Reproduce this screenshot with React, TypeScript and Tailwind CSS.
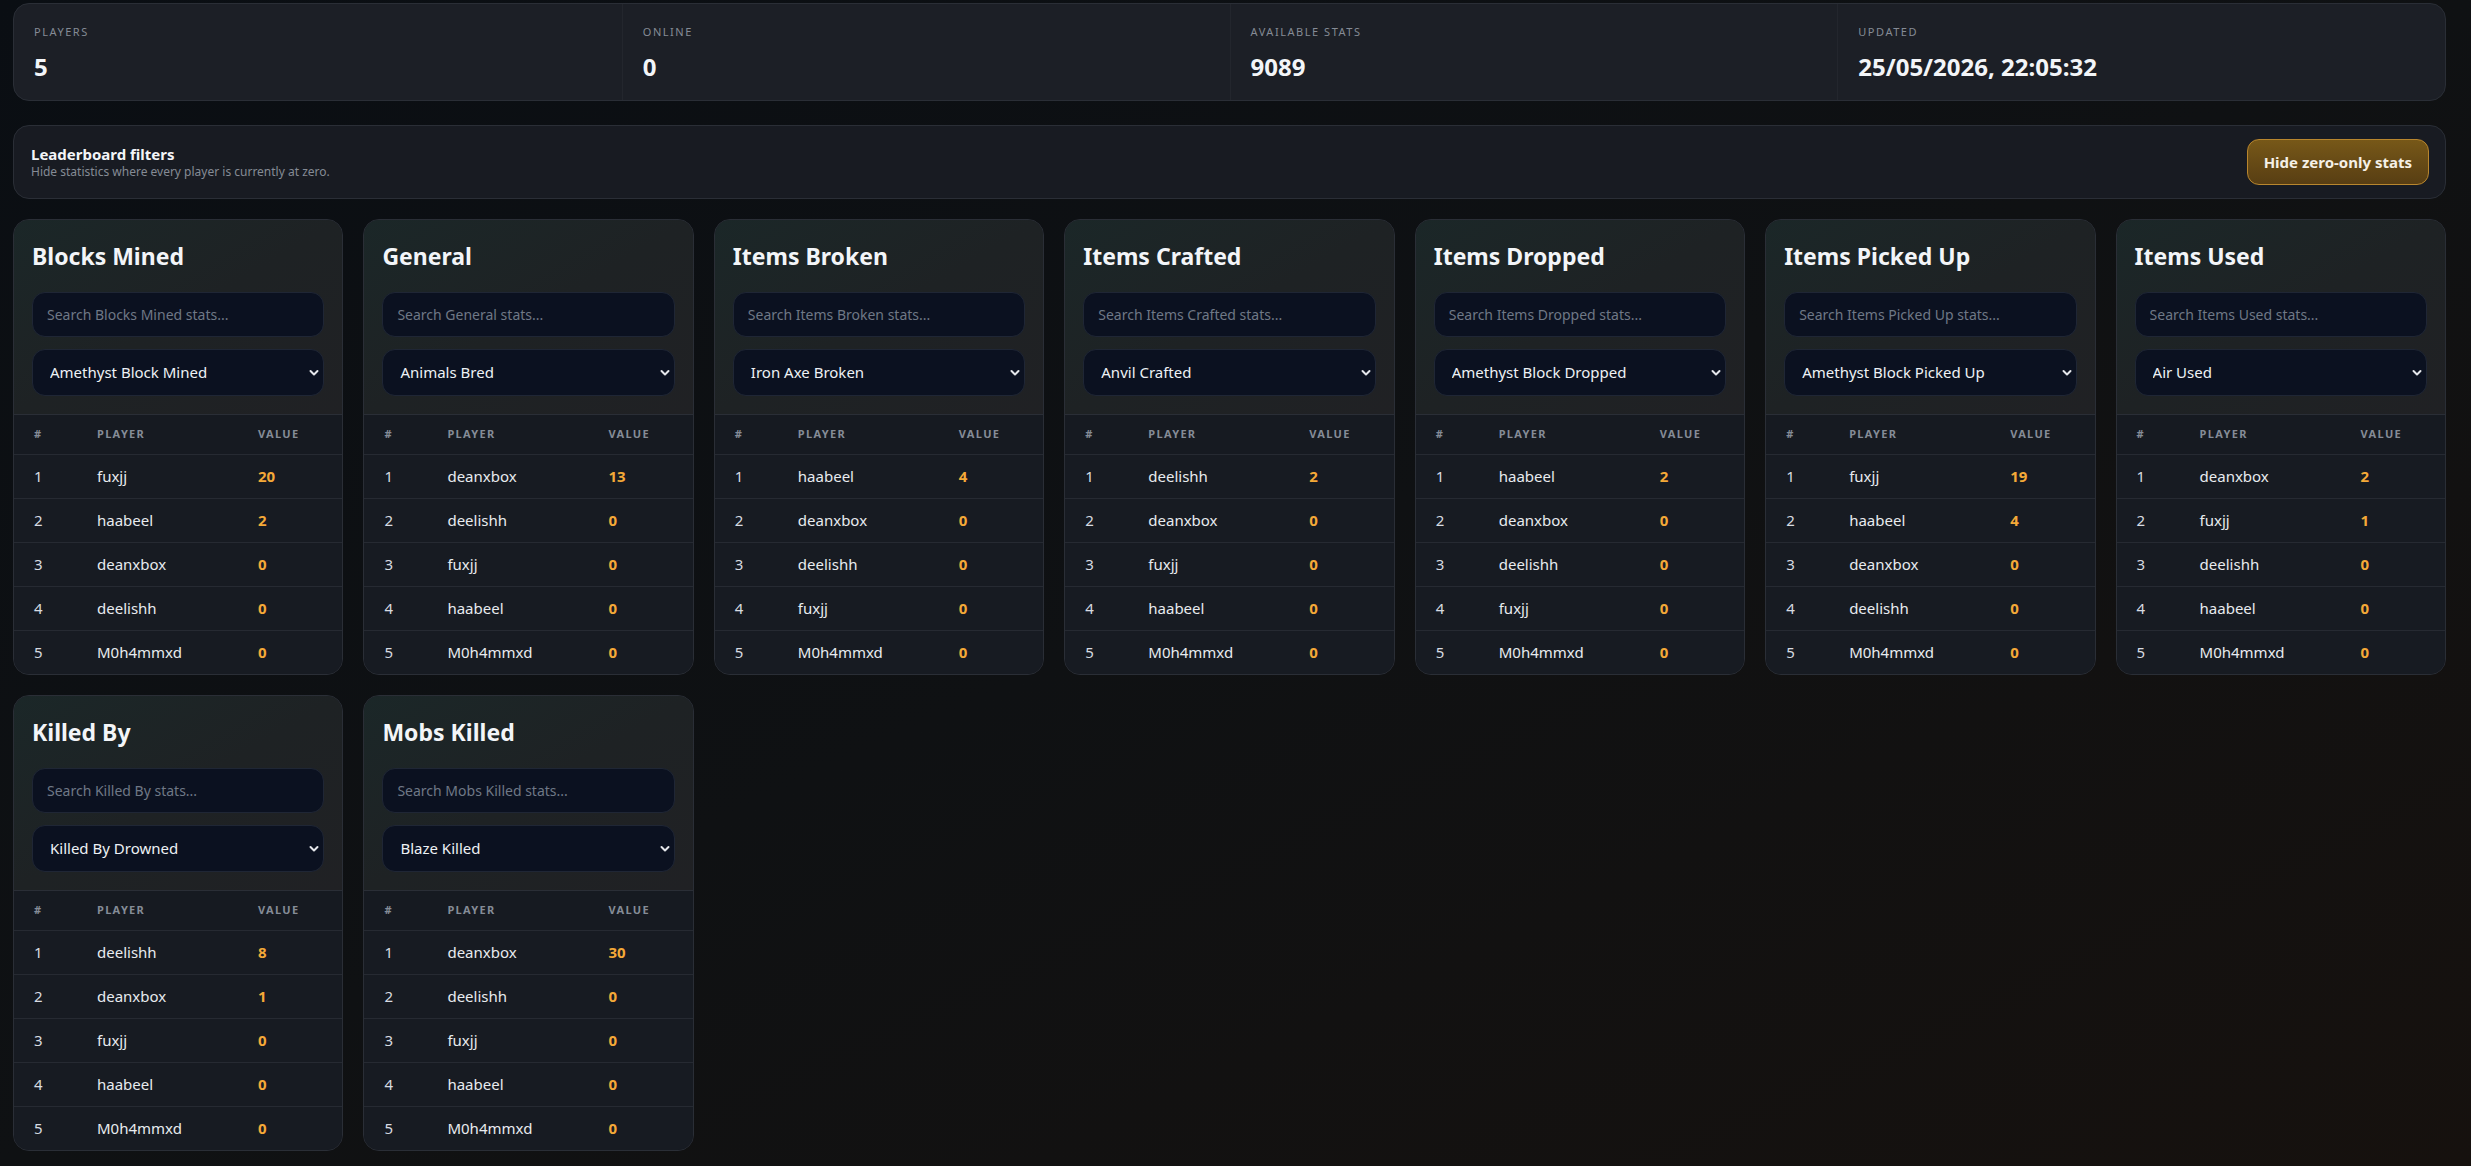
import React from 'react'

type Row = [string, number]

interface Board {
  title: string
  stat: string
  rows: Row[]
}

const STATS = [
  { label: 'Players', value: '5' },
  { label: 'Online', value: '0' },
  { label: 'Available stats', value: '9089' },
  { label: 'Updated', value: '25/05/2026, 22:05:32' },
]

const BOARDS: Board[] = [
  { title: 'Blocks Mined', stat: 'Amethyst Block Mined', rows: [['fuxjj', 20], ['haabeel', 2], ['deanxbox', 0], ['deelishh', 0], ['M0h4mmxd', 0]] },
  { title: 'General', stat: 'Animals Bred', rows: [['deanxbox', 13], ['deelishh', 0], ['fuxjj', 0], ['haabeel', 0], ['M0h4mmxd', 0]] },
  { title: 'Items Broken', stat: 'Iron Axe Broken', rows: [['haabeel', 4], ['deanxbox', 0], ['deelishh', 0], ['fuxjj', 0], ['M0h4mmxd', 0]] },
  { title: 'Items Crafted', stat: 'Anvil Crafted', rows: [['deelishh', 2], ['deanxbox', 0], ['fuxjj', 0], ['haabeel', 0], ['M0h4mmxd', 0]] },
  { title: 'Items Dropped', stat: 'Amethyst Block Dropped', rows: [['haabeel', 2], ['deanxbox', 0], ['deelishh', 0], ['fuxjj', 0], ['M0h4mmxd', 0]] },
  { title: 'Items Picked Up', stat: 'Amethyst Block Picked Up', rows: [['fuxjj', 19], ['haabeel', 4], ['deanxbox', 0], ['deelishh', 0], ['M0h4mmxd', 0]] },
  { title: 'Items Used', stat: 'Air Used', rows: [['deanxbox', 2], ['fuxjj', 1], ['deelishh', 0], ['haabeel', 0], ['M0h4mmxd', 0]] },
  { title: 'Killed By', stat: 'Killed By Drowned', rows: [['deelishh', 8], ['deanxbox', 1], ['fuxjj', 0], ['haabeel', 0], ['M0h4mmxd', 0]] },
  { title: 'Mobs Killed', stat: 'Blaze Killed', rows: [['deanxbox', 30], ['deelishh', 0], ['fuxjj', 0], ['haabeel', 0], ['M0h4mmxd', 0]] },
]

function Chevron() {
  return (
    <svg
      className="pointer-events-none absolute right-[5px] top-1/2 -translate-y-1/2"
      width="10"
      height="7"
      viewBox="0 0 10 7"
      fill="none"
    >
      <path d="M1.5 1.5 5 5l3.5-3.5" stroke="#e5e7eb" strokeWidth="2" strokeLinecap="round" strokeLinejoin="round" />
    </svg>
  )
}

function LeaderboardCard({ board }: { board: Board }) {
  return (
    <div className="overflow-hidden rounded-2xl border border-[#2a2e36] bg-[#171a21]">
      <div className="bg-gradient-to-br from-[#1b2728] via-[#1e2224] to-[#202124] px-[18px] pt-5 pb-[18px]">
        <h2 className="text-[23px] leading-8 font-bold text-[#f3f5f8] mb-5">{board.title}</h2>
        <input
          type="text"
          placeholder={`Search ${board.title} stats...`}
          className="block h-[45px] w-full rounded-[13px] border border-[#1f2635] bg-[#0b1120] px-[14px] text-sm text-[#e5e7eb] outline-none placeholder:text-[#6f7886]"
        />
        <div className="relative mt-3">
          <select
            defaultValue={board.stat}
            className="block h-[47px] w-full appearance-none rounded-[13px] border border-[#1f2635] bg-[#0b1120] pl-[17px] pr-6 text-[15px] text-[#eef1f5] outline-none"
          >
            <option value={board.stat}>{board.stat}</option>
          </select>
          <Chevron />
        </div>
      </div>
      <div className="border-t border-[#2a2e36]">
        <div className="grid h-[39px] grid-cols-[63px_161px_1fr] items-center bg-[#161a21] text-[11px] font-bold tracking-[0.12em] text-[#858c97]">
          <div className="pl-5">#</div>
          <div className="pl-5">PLAYER</div>
          <div className="pl-5">VALUE</div>
        </div>
        {board.rows.map(([name, value], i) => (
          <div
            key={name}
            className="grid h-[44px] grid-cols-[63px_161px_1fr] items-center border-t border-[#262a32] bg-[#171b22] text-[15px]"
          >
            <div className="pl-5 text-[#d7dbe1]">{i + 1}</div>
            <div className="pl-5 text-[#e8ebef]">{name}</div>
            <div className="pl-5 font-bold text-[#f4a938]">{value}</div>
          </div>
        ))}
      </div>
    </div>
  )
}

export default function App() {
  return (
    <div
      className="min-h-screen bg-gradient-to-br from-[#0a0e13] via-[#0f1113] to-[#16110e] pt-[3px] pb-4 pl-[13px] pr-[25px]"
      style={{ fontFamily: '"Segoe UI", "Noto Sans", sans-serif' }}
    >
      {/* Summary */}
      <div className="grid grid-cols-4 rounded-2xl border border-[#2a2e36] bg-[#1c1f26]">
        {STATS.map((s, i) => (
          <div key={s.label} className={`px-5 pt-5 pb-[18px] ${i > 0 ? 'border-l border-[#23262d]' : ''}`}>
            <div className="text-[11px] leading-4 uppercase tracking-[0.14em] text-[#858b95]">{s.label}</div>
            <div className="mt-3 text-2xl leading-[30px] font-bold text-[#f3f5f8]">{s.value}</div>
          </div>
        ))}
      </div>

      {/* Filters */}
      <div className="mt-6 flex items-center justify-between rounded-2xl border border-[#2a2e36] bg-[#181b22] py-[13px] pl-[17px] pr-4">
        <div>
          <div className="text-[15px] leading-5 font-bold text-[#f3f5f8]">Leaderboard filters</div>
          <div className="text-xs leading-4 text-[#858b95]">Hide statistics where every player is currently at zero.</div>
        </div>
        <button className="h-[46px] rounded-xl border border-[#b8862e] bg-gradient-to-b from-[#775818] to-[#583e13] px-4 text-[15px] font-bold text-[#f5f0e6]">
          Hide zero-only stats
        </button>
      </div>

      {/* Boards */}
      <div className="mt-5 grid grid-cols-7 gap-5">
        {BOARDS.map((b) => (
          <LeaderboardCard key={b.title} board={b} />
        ))}
      </div>
    </div>
  )
}
